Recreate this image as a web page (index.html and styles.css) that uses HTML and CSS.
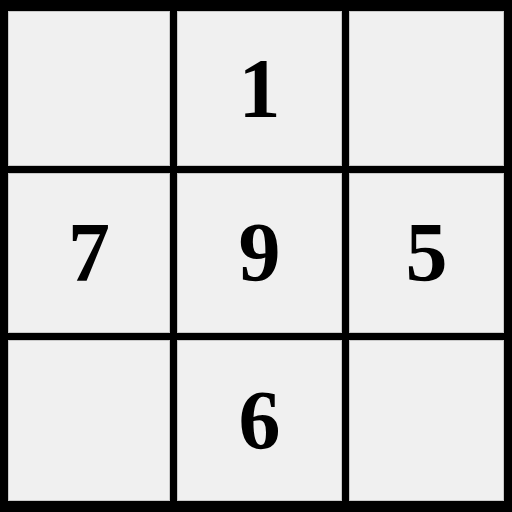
FILE: index.html
```html
<!DOCTYPE html>
<html>
<head>
<meta charset="utf-8">
<link rel="stylesheet" href="styles.css">
</head>
<body>
<div class="grid">
  <div class="cell"></div>
  <div class="cell">1</div>
  <div class="cell"></div>
  <div class="cell">7</div>
  <div class="cell">9</div>
  <div class="cell">5</div>
  <div class="cell"></div>
  <div class="cell">6</div>
  <div class="cell"></div>
</div>
</body>
</html>
```
FILE: styles.css
```css
html, body {
  margin: 0;
  padding: 0;
  background: #000;
  width: 512px;
  height: 512px;
  overflow: hidden;
}
.grid {
  display: grid;
  grid-template-columns: 162px 165px 155px;
  grid-template-rows: 155px 160px 161px;
  gap: 7px;
  padding: 11px 0 0 8px;
}
.cell {
  background: #f0f0f0;
  border: 1px solid #c8c8c8;
  display: flex;
  align-items: center;
  justify-content: center;
  font-family: "Liberation Serif", "Times New Roman", serif;
  font-weight: bold;
  font-size: 84px;
  color: #000;
  line-height: 1;
}
```
